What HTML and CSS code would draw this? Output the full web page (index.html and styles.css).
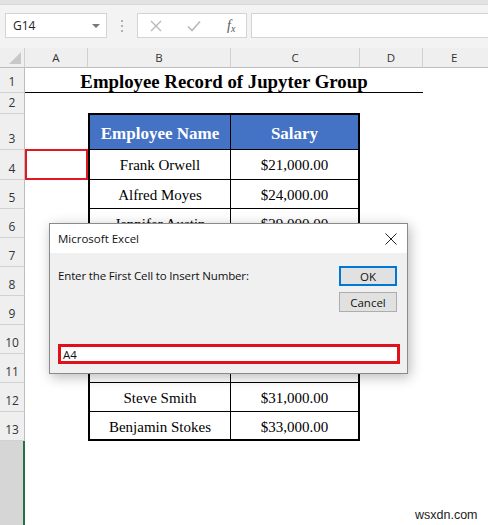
FILE: index.html
```html
<!DOCTYPE html>
<html>
<head>
<meta charset="utf-8">
<link rel="stylesheet" href="styles.css">
</head>
<body>
<div class="app">
  <div class="topstrip"></div>
  <div class="toolbar">
    <div class="namebox"><span class="nb-text">G14</span><span class="nb-arrow"></span></div>
    <div class="dots"><i></i><i></i><i></i></div>
    <div class="fxbox">
      <svg class="ic-x" width="12" height="12" viewBox="0 0 12 12"><path d="M1 1 L11 11 M11 1 L1 11" stroke="#b9b9b9" stroke-width="1.4" fill="none"/></svg>
      <svg class="ic-check" width="14" height="12" viewBox="0 0 14 12"><path d="M1 6.5 L5 10.5 L13 1.5" stroke="#b9b9b9" stroke-width="1.6" fill="none"/></svg>
      <span class="fx">f<sub>x</sub></span>
    </div>
    <div class="formula"></div>
  </div>
  <div class="sheet">
    <div class="corner"><span class="tri"></span></div>
    <div class="colh">A</div>
    <div class="colh">B</div>
    <div class="colh">C</div>
    <div class="colh">D</div>
    <div class="colh last">E</div>

    <div class="rowh r1">1</div>
    <div class="title">Employee Record of Jupyter Group</div>
    <div class="rowh r2">2</div>
    <div class="rowh r3">3</div>
    <div class="rowh">4</div>
    <div class="rowh">5</div>
    <div class="rowh">6</div>
    <div class="rowh">7</div>
    <div class="rowh">8</div>
    <div class="rowh">9</div>
    <div class="rowh">10</div>
    <div class="rowh">11</div>
    <div class="rowh">12</div>
    <div class="rowh">13</div>
    <div class="rowh rest"></div>

    <div class="selcell"></div>

    <div class="table">
      <div class="th">Employee Name</div><div class="th">Salary</div>
      <div class="td">Frank Orwell</div><div class="td">$21,000.00</div>
      <div class="td">Alfred Moyes</div><div class="td">$24,000.00</div>
      <div class="td">Jennifer Austin</div><div class="td">$29,000.00</div>
      <div class="td"></div><div class="td"></div>
      <div class="td"></div><div class="td"></div>
      <div class="td"></div><div class="td"></div>
      <div class="td"></div><div class="td"></div>
      <div class="td"></div><div class="td"></div>
      <div class="td">Steve Smith</div><div class="td">$31,000.00</div>
      <div class="td">Benjamin Stokes</div><div class="td">$33,000.00</div>
    </div>
  </div>

  <div class="dialog">
    <div class="dlg-title">
      <span>Microsoft Excel</span>
      <svg class="dlg-close" width="12" height="12" viewBox="0 0 12 12"><path d="M0.5 0.5 L11.5 11.5 M11.5 0.5 L0.5 11.5" stroke="#222" stroke-width="1" fill="none"/></svg>
    </div>
    <div class="dlg-body">
      <div class="dlg-top">
        <div class="prompt">Enter the First Cell to Insert Number:</div>
        <div class="btns">
          <div class="btn ok">OK</div>
          <div class="btn">Cancel</div>
        </div>
      </div>
      <div class="input">A4</div>
    </div>
  </div>

  <div class="watermark">wsxdn.com</div>
</div>
</body>
</html>
```
FILE: styles.css
```css
html, body {
  margin: 0;
  padding: 0;
}
body {
  width: 488px;
  height: 525px;
  overflow: hidden;
  background: #fff;
  font-family: "Liberation Sans", Arial, sans-serif;
}
.app {
  position: relative;
  width: 488px;
  height: 525px;
  overflow: hidden;
}
.topstrip {
  height: 4px;
  background: #e2e2e2;
  border-bottom: 1px solid #d8d8d8;
}
.toolbar {
  height: 43px;
  background: #f3f3f3;
  display: flex;
  align-items: flex-start;
  padding-top: 8px;
  box-sizing: border-box;
}
.namebox {
  margin-left: 5px;
  width: 102px;
  height: 25px;
  box-sizing: border-box;
  background: #fff;
  border: 1px solid #d4d4d4;
  display: flex;
  align-items: center;
  justify-content: space-between;
  padding: 0 6px 0 7px;
}
.nb-text {
  font-family: "Open Sans", "Liberation Sans", sans-serif;
  font-size: 12px;
  color: #222;
}
.nb-arrow {
  width: 0;
  height: 0;
  border-left: 4px solid transparent;
  border-right: 4px solid transparent;
  border-top: 4px solid #777;
}
.dots {
  width: 30px;
  height: 25px;
  display: flex;
  flex-direction: column;
  align-items: center;
  justify-content: center;
  gap: 3px;
}
.dots i {
  display: block;
  width: 2px;
  height: 2px;
  background: #b0b0b0;
}
.fxbox {
  width: 110px;
  height: 25px;
  box-sizing: border-box;
  background: #fff;
  border: 1px solid #d4d4d4;
  display: flex;
  align-items: center;
  padding-left: 12px;
}
.ic-x { margin-right: 25px; }
.ic-check { margin-right: 26px; }
.fx {
  font-family: "Liberation Serif", serif;
  font-style: italic;
  font-size: 14px;
  color: #555;
}
.fx sub {
  font-size: 10px;
  vertical-align: -2px;
}
.formula {
  margin-left: 4px;
  flex: 1;
  height: 25px;
  box-sizing: border-box;
  background: #fff;
  border: 1px solid #d4d4d4;
  border-right: none;
}
.sheet {
  display: grid;
  grid-template-columns: 25px 63px 143px 129px 63px 1fr;
  grid-template-rows: 20px 25px 21px 36px 30px repeat(9, 29px) 1fr;
  height: 477px;
}
.corner {
  background: #efefef;
  border-right: 1px solid #cfcfcf;
  border-bottom: 1px solid #bdbdbd;
  position: relative;
}
.tri {
  position: absolute;
  right: 3px;
  bottom: 3px;
  width: 0;
  height: 0;
  border-left: 12px solid transparent;
  border-bottom: 12px solid #c8c8c8;
}
.colh {
  background: #efefef;
  border-right: 1px solid #cfcfcf;
  border-bottom: 1px solid #bdbdbd;
  font-family: "Open Sans", "Liberation Sans", sans-serif;
  font-size: 11.5px;
  color: #333;
  display: flex;
  align-items: center;
  justify-content: center;
}
.colh.last { border-right: none; justify-content: flex-start; padding-left: 28px; }
.rowh {
  grid-column: 1;
  background: #efefef;
  border-right: 1px solid #bdbdbd;
  border-bottom: 1px solid #d2d2d2;
  font-family: "Open Sans", "Liberation Sans", sans-serif;
  font-size: 12px;
  color: #333;
  display: flex;
  align-items: flex-end;
  justify-content: center;
  padding-bottom: 2px;
  box-sizing: border-box;
}
.rowh.rest {
  background: #d6d6d6;
  border-bottom: none;
  border-right: 2px solid #217346;
}
.title {
  grid-column: 2 / 6;
  grid-row: 2;
  border-bottom: 1px solid #000;
  font-family: "Liberation Serif", serif;
  font-weight: bold;
  font-size: 18.8px;
  text-align: center;
  line-height: 28px;
  height: 24px;
  overflow: visible;
  color: #000;
}
.selcell {
  grid-column: 2;
  grid-row: 5;
  border: 2px solid #e0191f;
  margin-top: -1px;
}
.table {
  grid-column: 3 / 5;
  grid-row: 4 / 15;
  border: 2px solid #000;
  margin-top: -1px;
  display: grid;
  grid-template-columns: 141px 1fr;
  grid-template-rows: 35px 30px repeat(9, 29px);
}
.th {
  background: #4472c4;
  color: #fff;
  font-family: "Liberation Serif", serif;
  font-weight: bold;
  font-size: 17px;
  display: flex;
  align-items: center;
  justify-content: center;
  padding-top: 3px;
  box-sizing: border-box;
  border-bottom: 1px solid #000;
}
.td {
  font-family: "Liberation Serif", serif;
  font-size: 15px;
  color: #000;
  display: flex;
  align-items: center;
  justify-content: center;
  padding-top: 2px;
  box-sizing: border-box;
  border-bottom: 1px solid #000;
}
.th:nth-child(odd), .td:nth-child(odd) { border-right: 1px solid #000; }
.td:nth-last-child(-n+2) { border-bottom: none; }

.dialog {
  position: absolute;
  left: 49px;
  top: 223px;
  width: 359px;
  height: 151px;
  box-sizing: border-box;
  border: 1px solid #8a8a8a;
  background: #f0f0f0;
  box-shadow: 2px 3px 12px rgba(0,0,0,0.28);
  display: flex;
  flex-direction: column;
}
.dlg-title {
  height: 29px;
  background: #fff;
  display: flex;
  align-items: center;
  justify-content: space-between;
  padding: 0 10px 0 8px;
  font-family: "Open Sans", "Liberation Sans", sans-serif;
  font-size: 11.5px;
  color: #111;
}
.dlg-body {
  flex: 1;
  display: flex;
  flex-direction: column;
  justify-content: space-between;
  padding: 12px 10px 9px 8px;
}
.dlg-top {
  display: flex;
  justify-content: space-between;
  align-items: flex-start;
}
.prompt {
  font-family: "Open Sans", "Liberation Sans", sans-serif;
  font-size: 11.5px;
  color: #111;
  padding-top: 3px;
  letter-spacing: -0.15px;
}
.btns {
  display: flex;
  flex-direction: column;
  gap: 6px;
  margin-top: 1px;
}
.btn {
  width: 58px;
  height: 20px;
  box-sizing: border-box;
  background: #e1e1e1;
  border: 1px solid #adadad;
  font-family: "Open Sans", "Liberation Sans", sans-serif;
  font-size: 11.5px;
  color: #111;
  display: flex;
  align-items: center;
  justify-content: center;
}
.btn.ok {
  border: 2px solid #0078d7;
}
.input {
  margin-left: 0;
  margin-right: -3px;
  height: 20px;
  box-sizing: border-box;
  background: #fff;
  border: 3px solid #e0111b;
  font-family: "Open Sans", "Liberation Sans", sans-serif;
  font-size: 11.5px;
  color: #111;
  display: flex;
  align-items: center;
  padding-left: 2px;
}
.watermark {
  position: absolute;
  left: 415px;
  top: 508px;
  font-family: "Liberation Sans", Arial, sans-serif;
  font-size: 12.5px;
  color: #222;
}
```
